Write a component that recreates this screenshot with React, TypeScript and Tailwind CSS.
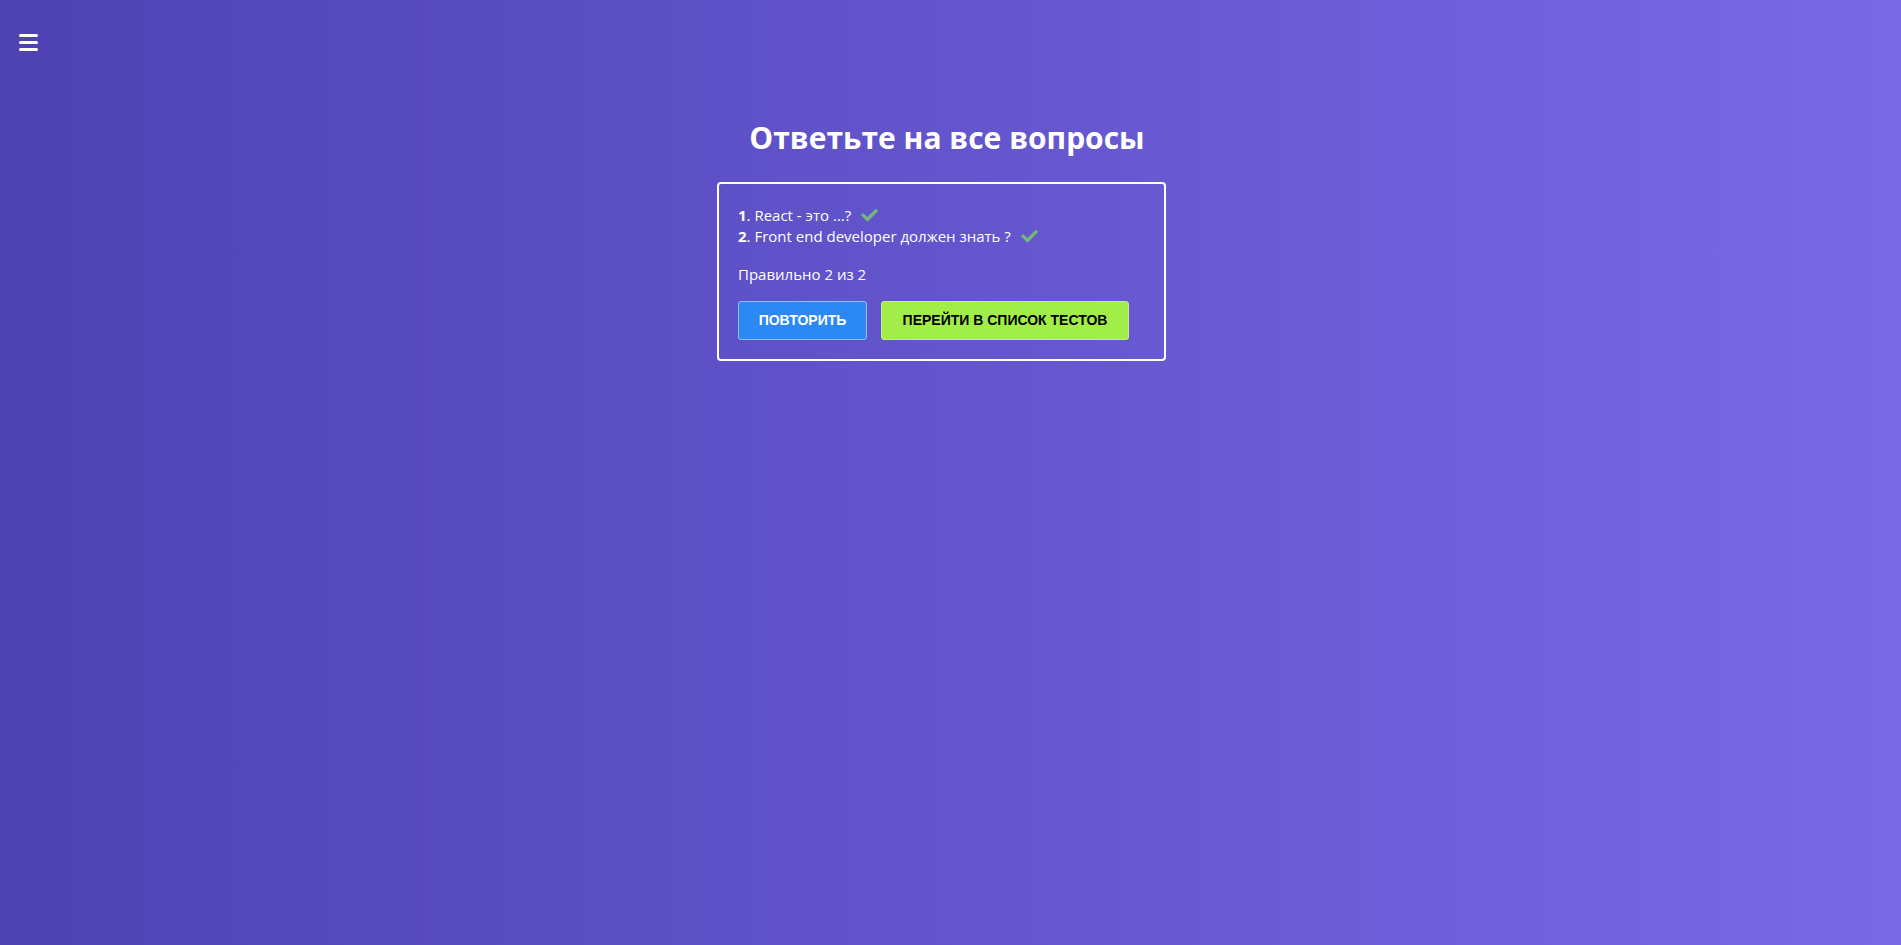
import React from "react";

const questions = [
  { id: 1, title: "React - это ...?" },
  { id: 2, title: "Front end developer должен знать ?" },
];

const Check = () => (
  <svg viewBox="0 0 512 400" className="ml-[10px] inline-block h-[13px] w-[17px] fill-[#74b67b]">
    <path d="M173.9 375.4l-166.4-166.4c-10-10-10-26.2 0-36.2l36.2-36.2c10-10 26.2-10 36.2 0L192 248.7 432.1 8.6c10-10 26.2-10 36.2 0l36.2 36.2c10 10 10 26.2 0 36.2l-294.4 294.4c-10 10-26.2 10-36.2 0z" />
  </svg>
);

export default function App() {
  return (
    <div className="min-h-screen w-full bg-gradient-to-r from-[#4e42b3] to-[#7a68e7] font-['Open_Sans',sans-serif] text-white">
      {/* кнопка меню */}
      <div className="px-[19px] pt-[34px]">
        <div className="flex w-[19px] flex-col gap-[4px]">
          <span className="h-[3px] w-full rounded-sm bg-white" />
          <span className="h-[3px] w-full rounded-sm bg-white" />
          <span className="h-[3px] w-full rounded-sm bg-white" />
        </div>
      </div>

      <div className="flex flex-col items-center pt-[67px]">
        <h1 className="ml-[-7px] text-[30px] font-bold leading-[40px]">Ответьте на все вопросы</h1>

        <div className="mr-[18px] mt-[24px] w-[449px] rounded-[4px] border-2 border-white px-[19px] pb-[19px] pt-[21px]">
          <ul className="text-[15px] leading-[21px]">
            {questions.map((q) => (
              <li key={q.id} className="flex items-center">
                <strong>{q.id}</strong>. {q.title}
                <Check />
              </li>
            ))}
          </ul>
          <p className="mt-[17px] text-[15px] leading-[21px]">Правильно 2 из 2</p>

          <div className="mt-[16px] flex gap-[14px] font-['Liberation_Sans',sans-serif] text-[14px] font-bold">
            <button className="h-[39px] w-[129px] rounded-[3px] border border-[#8cc0ff] bg-[#2b88f5] uppercase text-white">
              Повторить
            </button>
            <button className="h-[39px] w-[248px] rounded-[3px] border border-[#c4f08c] bg-[#a2ee48] uppercase text-black">
              Перейти в список тестов
            </button>
          </div>
        </div>
      </div>
    </div>
  );
}
